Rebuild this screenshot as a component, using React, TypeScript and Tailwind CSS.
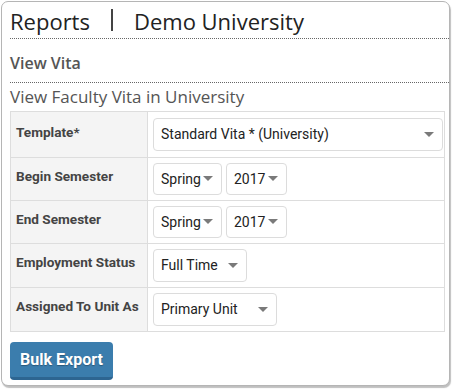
import React from "react";

function Caret() {
  return (
    <svg width="10" height="6" viewBox="0 0 10 6" className="shrink-0">
      <path d="M0 0 L10 0 L5 5 Z" fill="#7a7a7a" />
    </svg>
  );
}

function Select({ text, w, h = 33 }: { text: string; w: string; h?: number }) {
  return (
    <div
      className={`flex items-center justify-between ${w} rounded-[4px] border border-[#dcdcdc] bg-white pl-[7px] pr-[8px] text-[14px] text-[#222]`}
      style={{ height: h, fontFamily: "Roboto, 'Liberation Sans', sans-serif" }}
    >
      <span>{text}</span>
      <Caret />
    </div>
  );
}

function Row({ label, children, top = false }: { label: string; children: React.ReactNode; top?: boolean }) {
  return (
    <div className={`flex ${top ? "" : "border-t border-[#dddddd]"}`}>
      <div
        className={`w-[137px] shrink-0 whitespace-nowrap border-r border-[#dddddd] bg-[#f4f4f4] px-[5px] text-[13.6px] font-bold text-[#444] ${top ? "pt-[10px]" : "pt-[8px]"}`}
        style={{ fontFamily: "Roboto, 'Liberation Sans', sans-serif" }}
      >
        {label}
      </div>
      <div className={`flex flex-1 gap-[4px] px-[5px] ${top ? "py-[6px]" : "py-[5px]"}`}>{children}</div>
    </div>
  );
}

export default function App() {
  return (
    <div className="h-[390px] w-[452px] bg-white p-[1px] pr-[2px]">
      <div className="h-[385px] rounded-[7px] border border-[#b5b5b5] bg-white shadow-[1px_2px_1px_rgba(0,0,0,0.25)] pl-[8px]">
        <div
          className="flex h-[37px] items-center border-b border-dotted border-[#666] text-[22px] text-[#222]"
          style={{ fontFamily: "'Open Sans', Lato, sans-serif" }}
        >
          <span className="mt-[2px]">Reports</span>
          <span className="mx-[21px] h-[22px] w-[2px] bg-[#444]" />
          <span className="mt-[2px]">Demo University</span>
        </div>
        <div
          className="flex h-[44px] items-end pb-[7px] border-b border-dotted border-[#666] text-[16px] font-semibold text-[#555]"
          style={{ fontFamily: "'Open Sans', Lato, sans-serif" }}
        >
          View Vita
        </div>
        <div
          className="flex h-[28px] items-center text-[17px] text-[#555]"
          style={{ fontFamily: "'Open Sans', Lato, sans-serif" }}
        >
          View Faculty Vita in University
        </div>
        <div className="mr-[4px] border border-[#dddddd]">
          <Row label="Template*" top>
            <Select text="Standard Vita * (University)" w="w-[290px]" />
          </Row>
          <Row label="Begin Semester">
            <Select text="Spring" w="w-[69px]" h={32} />
            <Select text="2017" w="w-[61px]" h={32} />
          </Row>
          <Row label="End Semester">
            <Select text="Spring" w="w-[69px]" h={32} />
            <Select text="2017" w="w-[61px]" h={32} />
          </Row>
          <Row label="Employment Status">
            <Select text="Full Time" w="w-[94px]" />
          </Row>
          <Row label="Assigned To Unit As">
            <Select text="Primary Unit" w="w-[124px]" />
          </Row>
        </div>
        <div className="pt-[10px]">
          <button
            className="h-[38px] w-[103px] rounded-[4px] border-b-[3px] border-[#2d6591] bg-[#3b7dad] text-[16px] font-bold text-white"
            style={{ fontFamily: "Roboto, 'Liberation Sans', sans-serif", textShadow: "0 1px 1px rgba(0,0,0,0.3)" }}
          >
            Bulk Export
          </button>
        </div>
      </div>
    </div>
  );
}
